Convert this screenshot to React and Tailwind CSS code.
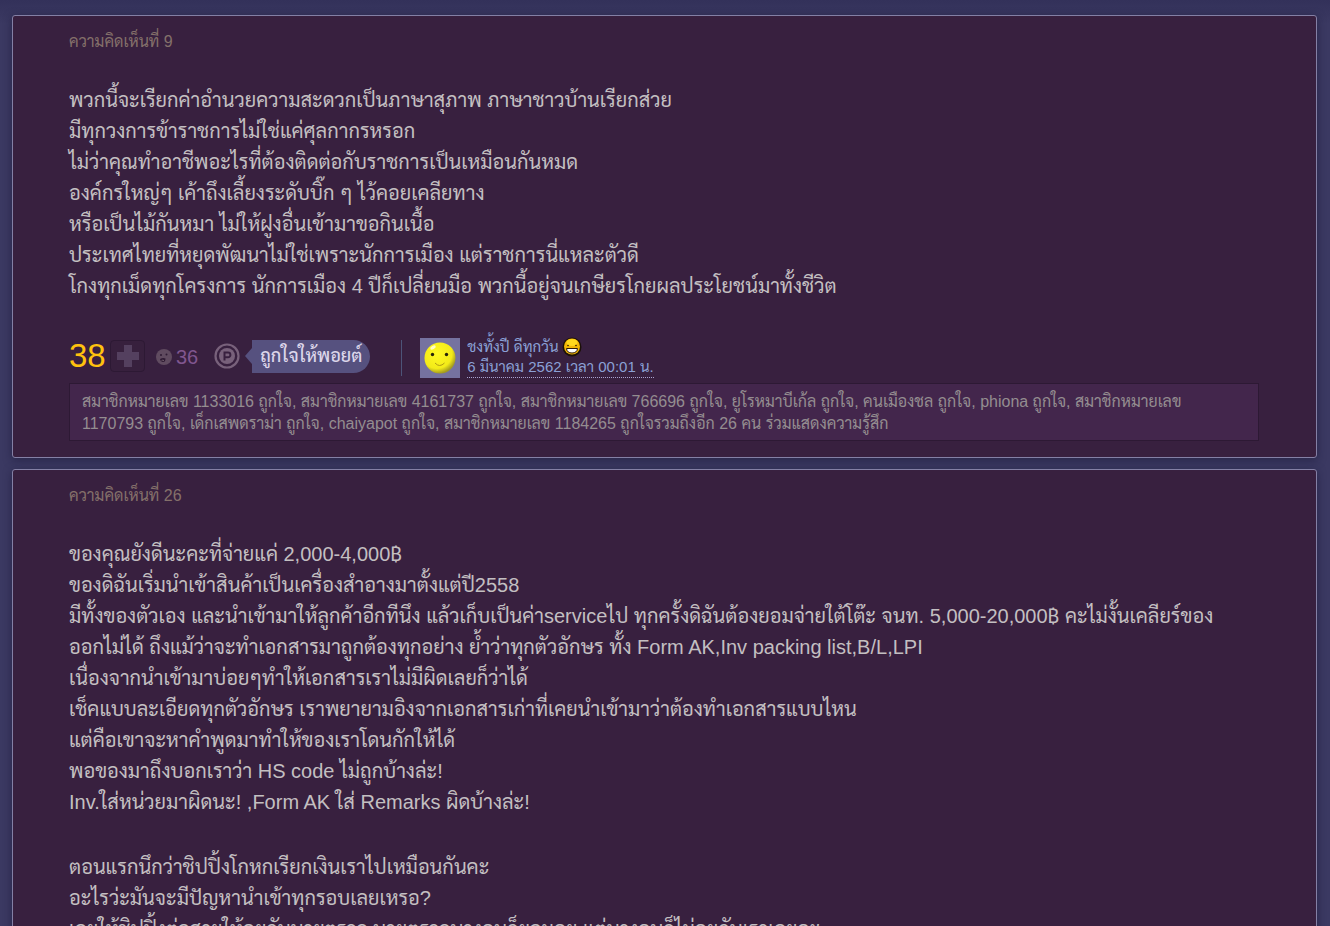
const COMMENTS = [
    {
        id: 9,
        paragraphs: [
            [
                "พวกนี้จะเรียกค่าอำนวยความสะดวกเป็นภาษาสุภาพ ภาษาชาวบ้านเรียกส่วย",
                "มีทุกวงการข้าราชการไม่ใช่แค่ศุลกากรหรอก",
                "ไม่ว่าคุณทำอาชีพอะไรที่ต้องติดต่อกับราชการเป็นเหมือนกันหมด",
                "องค์กรใหญ่ๆ เค้าถึงเลี้ยงระดับบิ๊ก ๆ ไว้คอยเคลียทาง",
                "หรือเป็นไม้กันหมา ไม่ให้ฝูงอื่นเข้ามาขอกินเนื้อ",
                "ประเทศไทยที่หยุดพัฒนาไม่ใช่เพราะนักการเมือง แต่ราชการนี่แหละตัวดี",
                "โกงทุกเม็ดทุกโครงการ นักการเมือง 4 ปีก็เปลี่ยนมือ พวกนี้อยู่จนเกษียรโกยผลประโยชน์มาทั้งชีวิต",
            ],
        ],
        votes: 38,
        emotions: 36,
        author: "ชงทั้งปี ดีทุกวัน",
        date: "6 มีนาคม 2562 เวลา 00:01 น.",
        likes: "สมาชิกหมายเลข 1133016 ถูกใจ, สมาชิกหมายเลข 4161737 ถูกใจ, สมาชิกหมายเลข 766696 ถูกใจ, ยูโรหมาบีเก้ล ถูกใจ, คนเมืองชล ถูกใจ, phiona ถูกใจ, สมาชิกหมายเลข 1170793 ถูกใจ, เด็กเสพดราม่า ถูกใจ, chaiyapot ถูกใจ, สมาชิกหมายเลข 1184265 ถูกใจรวมถึงอีก 26 คน ร่วมแสดงความรู้สึก",
    },
    {
        id: 26,
        paragraphs: [
            [
                "ของคุณยังดีนะคะที่จ่ายแค่ 2,000-4,000฿",
                "ของดิฉันเริ่มนำเข้าสินค้าเป็นเครื่องสำอางมาตั้งแต่ปี2558",
                "มีทั้งของตัวเอง และนำเข้ามาให้ลูกค้าอีกทีนึง แล้วเก็บเป็นค่าserviceไป ทุกครั้งดิฉันต้องยอมจ่ายใต้โต๊ะ จนท. 5,000-20,000฿ คะไม่งั้นเคลียร์ของ\nออกไม่ได้ ถึงแม้ว่าจะทำเอกสารมาถูกต้องทุกอย่าง ย้ำว่าทุกตัวอักษร ทั้ง Form AK,Inv packing list,B/L,LPI",
                "เนื่องจากนำเข้ามาบ่อยๆทำให้เอกสารเราไม่มีผิดเลยก็ว่าได้",
                "เช็คแบบละเอียดทุกตัวอักษร เราพยายามอิงจากเอกสารเก่าที่เคยนำเข้ามาว่าต้องทำเอกสารแบบไหน",
                "แต่คือเขาจะหาคำพูดมาทำให้ของเราโดนกักให้ได้",
                "พอของมาถึงบอกเราว่า HS code ไม่ถูกบ้างล่ะ!",
                "Inv.ใส่หน่วยมาผิดนะ! ,Form AK ใส่ Remarks ผิดบ้างล่ะ!",
            ],
            [
                "ตอนแรกนึกว่าชิปปิ้งโกหกเรียกเงินเราไปเหมือนกันคะ",
                "อะไรว่ะมันจะมีปัญหานำเข้าทุกรอบเลยเหรอ?",
                "เลยให้ชิปปิ้งต่อสายให้คุยกับนายตรวจ นายตรวจบางคนก็ยอมคุย แต่บางคนก็ไม่คุยกับเราเลยคะ",
            ],
        ],
    },
];

/* ===============================
   ICONS
================================ */
function PlusIcon() {
    return (
        <svg viewBox="0 0 24 24" className="w-6 h-6" aria-hidden="true">
            <path d="M8 1h8v7h7v8h-7v7H8v-7H1V8h7z" fill="#54405f" />
        </svg>
    );
}

function EmotionIcon() {
    return (
        <svg viewBox="0 0 18 18" className="w-[18px] h-[18px]" aria-hidden="true">
            <circle cx="9" cy="9" r="8" fill="#604b60" />
            <circle cx="6" cy="7" r="1" fill="#2e1a33" />
            <circle cx="11.5" cy="6.5" r="1" fill="#2e1a33" />
            <path d="M5 11q3-1.500 5.500-.5 0 3.500-2.500 3.500-2.500 0-3-3z" fill="#2e1a33" />
            <path d="M6.500 12.800q1-1 2.500-.3" stroke="#75606f" fill="none" />
        </svg>
    );
}

function PointIcon() {
    return (
        <svg viewBox="0 0 26 26" className="w-[26px] h-[26px]" aria-hidden="true">
            <circle cx="13" cy="13" r="11.500" fill="none" stroke="#78617b" strokeWidth="2.200" />
            <circle cx="13" cy="13" r="8" fill="#78617b" />
            <path d="M10.500 17.500v-8h3.500a2 2 0 0 1 0 4.800h-3.500" fill="none" stroke="#38203f" strokeWidth="2" />
        </svg>
    );
}

function Avatar() {
    return (
        <svg viewBox="0 0 40 40" className="w-10 h-10" aria-hidden="true">
            <defs>
                <radialGradient id="face" cx=".4" cy=".35" r=".65">
                    <stop offset="0" stopColor="#fff823" />
                    <stop offset=".75" stopColor="#f3eb18" />
                    <stop offset="1" stopColor="#a39b20" />
                </radialGradient>
            </defs>
            <path d="M0 0h40v40H0z" fill="#7572a0" />
            <circle cx="20" cy="20" r="15.500" fill="url(#face)" />
            <ellipse cx="13" cy="9.500" rx="3" ry="1.600" fill="#fffdc0" transform="rotate(-30 13 9.500)" />
            <circle cx="12.500" cy="16.500" r="1.700" fill="#27230a" />
            <circle cx="26.500" cy="16.500" r="1.700" fill="#27230a" />
            <path d="M15 25q4.500 5 9.500 0" fill="none" stroke="#b09b15" />
        </svg>
    );
}

function GrinIcon() {
    return (
        <svg viewBox="0 0 20 20" className="w-5 h-5" aria-hidden="true">
            <circle cx="10" cy="10" r="9.500" fill="#1c1008" />
            <circle cx="10" cy="9.500" r="8" fill="#f2b705" />
            <ellipse cx="10" cy="5.500" rx="5.500" ry="3.500" fill="#ffd81c" />
            <circle cx="6" cy="8.500" r=".8" fill="#2b1705" />
            <circle cx="14" cy="8.500" r=".8" fill="#2b1705" />
            <path d="M4.500 11.500h11q-.5 4.500-5.500 4.500t-5.500-4.500z" fill="#fff" stroke="#2b1705" />
        </svg>
    );
}

/* ===============================
   COMMENT PARTS
================================ */
function CommentFooter({ comment }) {
    return (
        <footer className="mt-8">
            <div className="flex items-center h-12 mb-px">
                <div className="flex items-center pb-1">
                    <span className="w-[41px] text-[33px] leading-8 text-[#ffc20e]">{comment.votes}</span>
                    <button
                        type="button"
                        aria-label="+"
                        className="w-[35px] h-8 flex items-center justify-center rounded border border-[#2d1934] bg-[#37203d]"
                    >
                        <PlusIcon />
                    </button>
                    <button type="button" className="ml-2.5 pt-0.5 flex items-center gap-[3px] text-xl leading-6 text-[#80568f]">
                        <EmotionIcon />
                        {comment.emotions}
                    </button>
                    <span className="ml-4">
                        <PointIcon />
                    </span>
                    <button type="button" className="ml-1 flex items-center text-[#dcd6ea]">
                        <svg viewBox="0 0 8 16" className="w-2 h-4" aria-hidden="true">
                            <path d="M8 0v16L1 8z" fill="#56517f" />
                        </svg>
                        <span className="h-[33px] px-2 flex items-center rounded-r-full bg-[#56517f] text-lg font-medium">
                            ถูกใจให้พอยต์
                        </span>
                    </button>
                </div>
                <span className="ml-[31px] w-px h-9 bg-[#4d5478]" />
                <div className="ml-[18px] flex items-center gap-[7px]">
                    <Avatar />
                    <div className="pb-0.5 text-[15px] leading-5 text-[#8ba0d6]">
                        <a href="#profile" className="flex items-center gap-1">
                            {comment.author}
                            <GrinIcon />
                        </a>
                        <time className="block border-b border-dotted border-[#a9a3cf]">{comment.date}</time>
                    </div>
                </div>
            </div>
            <p className="border border-[#2d1934] bg-[#43264c] px-3 pt-[7px] pb-[5px] text-base leading-[22px] text-[#948d90]">
                {comment.likes}
            </p>
        </footer>
    );
}

function Comment({ comment }) {
    return (
        <article className="rounded-[3px] border border-[#8480a5] bg-[#38203f] pl-14 pr-[57px] py-4 shadow-[0_2px_8px_rgba(20,15,45,0.5)]">
            <h2 className="text-base leading-5 text-[#84706a]">ความคิดเห็นที่ {comment.id}</h2>
            <div className="mt-[33px] space-y-[34px] text-xl leading-[31px] text-[#c3bfc1]">
                {comment.paragraphs.map((lines, i) => (
                    <div key={i}>
                        {lines.map(line => (
                            <p key={line} className="whitespace-pre-line">{line}</p>
                        ))}
                    </div>
                ))}
            </div>
            {comment.votes && <CommentFooter comment={comment} />}
        </article>
    );
}

export default function App() {
    return (
        <main
            lang="th"
            className="min-h-screen bg-[#3b3962] bg-linear-to-b from-[#33315a] to-[#3b3962] to-[24px] pl-3 pr-[13px] pt-[15px] pb-3 font-['Liberation_Sans','Sarabun','Noto_Sans_Thai',sans-serif]"
        >
            <div className="space-y-[11px]">
                {COMMENTS.map(comment => (
                    <Comment key={comment.id} comment={comment} />
                ))}
            </div>
        </main>
    );
}
